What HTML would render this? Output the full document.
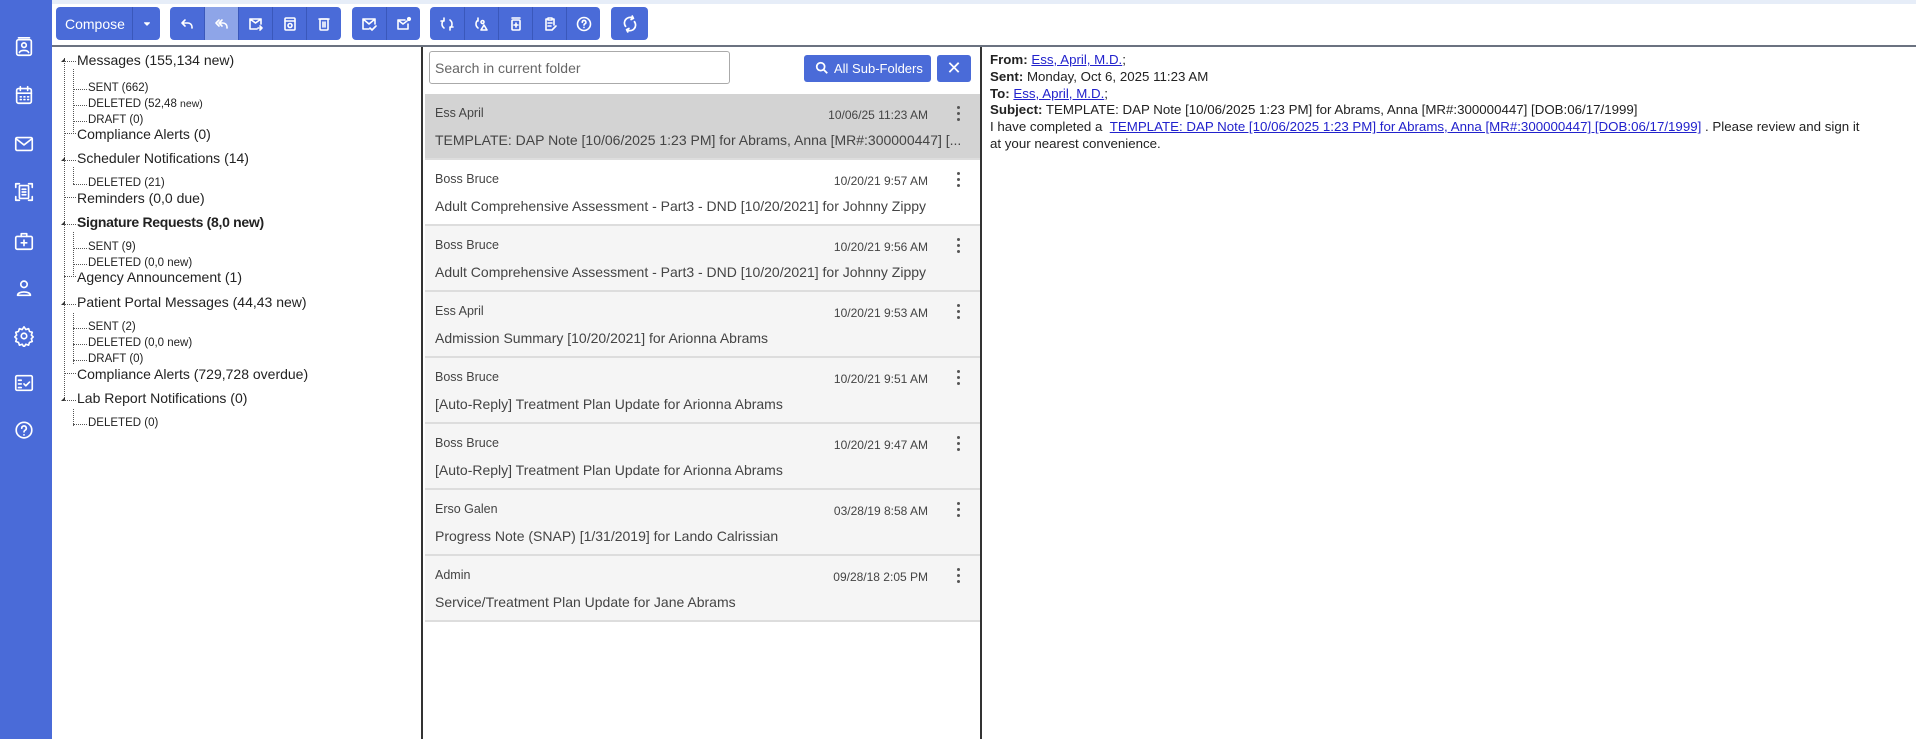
<!DOCTYPE html>
<html><head><meta charset="utf-8"><style>
*{box-sizing:border-box;margin:0;padding:0}
body{width:1916px;height:739px;overflow:hidden;background:#fff;font-family:"Liberation Sans",sans-serif;color:#222;position:relative}
.sb{position:absolute;left:0;top:0;width:52px;height:739px;background:#4a6bd8}
.sb svg{position:absolute;left:13px;width:22px;height:22px;fill:none;stroke:#fff;stroke-width:1.8;stroke-linecap:round;stroke-linejoin:round}
.topbar{position:absolute;left:52px;top:0;right:0;height:4px;background:#e6edf8}
.tb{position:absolute;top:7px;height:33px;background:#4a6bd8;border-radius:4px;display:flex;overflow:hidden}
.tb .b{width:34px;height:33px;border-left:1px solid #3a58bb;display:flex;align-items:center;justify-content:center}
.tb .b:first-child{border-left:none}
.tb svg{width:16px;height:16px;fill:none;stroke:#fff;stroke-width:1.6;stroke-linecap:round;stroke-linejoin:round}
.hl{position:absolute;left:52px;right:0;top:45px;height:2px;background:#6b7280}
.tree{position:absolute;left:52px;top:47px;width:371px;height:692px;border-right:2px solid #333}
.t{position:absolute;white-space:nowrap}
.t.l{font-size:14px;left:25px}
.t.s{font-size:11.5px;left:36px}
.dots{position:absolute;border-top:1px dotted #555}
.vd{position:absolute;border-left:1px dotted #555}
.tri{position:absolute;left:9px;width:0;height:0;border-left:4px solid transparent;border-bottom:4px solid #333}
.list{position:absolute;left:425px;top:47px;width:557px;height:692px;border-right:2px solid #333}
.srch{position:absolute;left:4px;top:4px;width:301px;height:33px;border:1px solid #aaa;border-radius:3px;font-size:14px;color:#666;padding:8px 5px}
.asf{position:absolute;left:379px;top:8px;width:127px;height:27px;background:#4a6bd8;border-radius:3px;color:#fff;font-size:13px;padding:6px 0 0 30px}
.xb{position:absolute;left:512px;top:8px;width:34px;height:27px;background:#4a6bd8;border-radius:3px;color:#fff;font-size:18px;text-align:center;line-height:27px}
.row{position:absolute;left:0;width:555px;height:66px;border-bottom:2px solid #ddd;background:#f5f5f5}
.row .n{position:absolute;left:10px;top:12px;font-size:12.5px;color:#444}
.row .d{position:absolute;right:52px;top:14px;font-size:12px;color:#444}
.row .k{position:absolute;left:532px;top:12px;width:3px}
.row .k i{display:block;width:3px;height:3px;background:#555;border-radius:50%;margin-bottom:3px}
.row .m{position:absolute;left:10px;top:38px;font-size:14px;color:#444;white-space:nowrap}
.det{position:absolute;left:990px;top:52px;font-size:13.3px;line-height:16.8px;color:#222}
.det a{color:#2222cc;text-decoration:underline}
</style></head><body>
<div class="sb">
<svg style="top:36px" viewBox="0 0 24 24"><rect x="4" y="4" width="16" height="17" rx="2"/><line x1="6" y1="2" x2="18" y2="2"/><circle cx="12" cy="10" r="2.5"/><path d="M7 18c1-3 9-3 10 0"/></svg>
<svg style="top:84px" viewBox="0 0 24 24"><rect x="4" y="5" width="16" height="16" rx="2"/><line x1="8" y1="3" x2="8" y2="7"/><line x1="16" y1="3" x2="16" y2="7"/><line x1="4" y1="10" x2="20" y2="10"/><path d="M8 14h1M12 14h1M16 14h1M8 17h1M12 17h1M16 17h1"/></svg>
<svg style="top:133px" viewBox="0 0 24 24"><rect x="3" y="5" width="18" height="14" rx="1.5"/><path d="M3 6l9 7 9-7"/></svg>
<svg style="top:181px" viewBox="0 0 24 24"><path d="M3 7V3h4M17 3h4v4M21 17v4h-4M7 21H3v-4"/><rect x="7" y="5" width="10" height="14" rx="1"/><path d="M10 9h4M10 12h4M10 15h4"/></svg>
<svg style="top:230px" viewBox="0 0 24 24"><rect x="3" y="7" width="18" height="14" rx="1.5"/><path d="M9 7V4h6v3M12 11v6M9 14h6"/></svg>
<svg style="top:277px" viewBox="0 0 24 24"><circle cx="12" cy="8" r="3.5"/><path d="M5 20c0-5 14-5 14 0z"/></svg>
<svg style="top:325px" viewBox="0 0 24 24"><circle cx="12" cy="12" r="3"/><path d="M12 2l2 3 3-1 1 3 3 1-1 3 2 2-2 2 1 3-3 1-1 3-3-1-2 3-2-3-3 1-1-3-3-1 1-3-2-2 2-2-1-3 3-1 1-3 3 1z"/></svg>
<svg style="top:372px" viewBox="0 0 24 24"><rect x="3" y="4" width="18" height="16" rx="1.5"/><path d="M6 9h3M6 13h3M6 17h3M12 13l2 2 4-4"/></svg>
<svg style="top:420px" viewBox="0 0 24 24"><circle cx="12" cy="11" r="8.5"/><path d="M9.5 9a2.5 2.5 0 1 1 3.5 2.3c-.7.4-1 1-1 1.7M12 16v.3"/></svg>
</div>
<div class="topbar"></div>
<div class="tb" style="left:56px;width:104px"><div style="width:76px;color:#fff;font-size:14px;padding:9px 0 0 9px">Compose</div><div class="b" style="width:28px"><svg viewBox="0 0 16 16" style="width:10px"><path d="M4 6h8l-4 4z" fill="#fff"/></svg></div></div>
<div class="tb" style="left:170px;width:171px">
<div class="b"><svg viewBox="0 0 16 16"><path d="M6 4L3 7l3 3M3 7h6a4 4 0 0 1 4 4v1"/></svg></div>
<div class="b" style="background:#8ea5e8"><svg viewBox="0 0 16 16"><path d="M5 4L2 7l3 3M8 4L5 7l3 3M5 7h4a4 4 0 0 1 4 4v1"/></svg></div>
<div class="b"><svg viewBox="0 0 16 16"><path d="M13 8V3H2v10h7M2 3l5.5 4L13 3M10 12h4M12 10l2 2-2 2"/></svg></div>
<div class="b"><svg viewBox="0 0 16 16"><rect x="3" y="2" width="10" height="12" rx="1"/><path d="M3 5h10"/><circle cx="8" cy="9.5" r="2"/></svg></div>
<div class="b"><svg viewBox="0 0 16 16"><rect x="4" y="3" width="8" height="11" rx="1"/><path d="M3 3h10M7 6v5M9 6v5"/></svg></div>
</div>
<div class="tb" style="left:352px;width:68px">
<div class="b"><svg viewBox="0 0 16 16"><path d="M14 8V3H2v10h6M2 3l6 5 6-5M9 12l2 2 4-4"/></svg></div>
<div class="b"><svg viewBox="0 0 16 16"><path d="M12 8v5H2V4h7M2 4l5 4 4-3"/><circle cx="13" cy="3" r="1.3" fill="#fff"/></svg></div>
</div>
<div class="tb" style="left:430px;width:170px">
<div class="b"><svg viewBox="0 0 16 16"><path d="M5 4a5 5 0 0 0 0 8M11 12a5 5 0 0 0 0-8M5 2v3H2M11 14v-3h3"/></svg></div>
<div class="b"><svg viewBox="0 0 16 16"><path d="M4 4a5 5 0 0 0 0 8M4 2v3M10 6a1.5 1.5 0 1 0 0 .1M7 14l3-5 3 5z"/></svg></div>
<div class="b"><svg viewBox="0 0 16 16"><rect x="4" y="4" width="8" height="10" rx="1"/><path d="M4 2h8M8 7v4M6 9h4"/></svg></div>
<div class="b"><svg viewBox="0 0 16 16"><path d="M10 3h2v6M6 3H4v11h5M6 2h4v2H6zM6 7h4M6 10h3M10 14l4-4"/></svg></div>
<div class="b"><svg viewBox="0 0 16 16"><circle cx="8" cy="8" r="6.5"/><path d="M6.3 6.3a1.8 1.8 0 1 1 2.4 1.6c-.5.3-.7.7-.7 1.2M8 11.3v.2"/></svg></div>
</div>
<div class="tb" style="left:611px;width:37px"><div class="b" style="width:37px"><svg viewBox="0 0 16 16" style="width:18px;height:18px"><path d="M4 10a5 5 0 0 1 6-7.5M12 6a5 5 0 0 1-6 7.5M10 1l1 2-2 1M6 15l-1-2 2-1"/></svg></div></div>
<div class="hl"></div>

<div class="tree">
<div class="vd" style="left:12px;top:11px;height:340px"></div>
<div class="vd" style="left:21px;top:22px;height:63px"></div>
<div class="vd" style="left:21px;top:120px;height:17px"></div>
<div class="vd" style="left:21px;top:185px;height:43px"></div>
<div class="vd" style="left:21px;top:266px;height:51px"></div>
<div class="vd" style="left:21px;top:362px;height:17px"></div>
<div class="tri" style="top:11px"></div><div class="tri" style="top:110px"></div><div class="tri" style="top:174px"></div><div class="tri" style="top:254px"></div><div class="tri" style="top:350px"></div>

<div class="dots" style="left:12px;top:14px;width:12px"></div><div class="t l" style="top:5px;left:25px">Messages (155,134 new)</div>
<div class="dots" style="left:21px;top:42px;width:14px"></div><div class="t s" style="top:35px">SENT (662)</div>
<div class="dots" style="left:21px;top:58px;width:14px"></div><div class="t s" style="top:51px">DELETED (52,48 <span style="font-size:10.5px">new)</span></div>
<div class="dots" style="left:21px;top:74px;width:14px"></div><div class="t s" style="top:67px">DRAFT (0)</div>
<div class="dots" style="left:12px;top:86px;width:12px"></div><div class="t l" style="top:79px">Compliance Alerts (0)</div>
<div class="dots" style="left:12px;top:113px;width:12px"></div><div class="t l" style="top:103px">Scheduler Notifications (14)</div>
<div class="dots" style="left:21px;top:137px;width:14px"></div><div class="t s" style="top:130px">DELETED (21)</div>
<div class="dots" style="left:12px;top:150px;width:12px"></div><div class="t l" style="top:143px">Reminders (0,0 due)</div>
<div class="dots" style="left:12px;top:177px;width:12px"></div><div class="t l" style="top:167px;font-weight:bold;letter-spacing:-0.3px">Signature Requests (8,0 new)</div>
<div class="dots" style="left:21px;top:201px;width:14px"></div><div class="t s" style="top:194px">SENT (9)</div>
<div class="dots" style="left:21px;top:217px;width:14px"></div><div class="t s" style="top:210px">DELETED (0,0 new)</div>
<div class="dots" style="left:12px;top:229px;width:12px"></div><div class="t l" style="top:222px">Agency Announcement (1)</div>
<div class="dots" style="left:12px;top:257px;width:12px"></div><div class="t l" style="top:247px">Patient Portal Messages (44,43 new)</div>
<div class="dots" style="left:21px;top:281px;width:14px"></div><div class="t s" style="top:274px">SENT (2)</div>
<div class="dots" style="left:21px;top:297px;width:14px"></div><div class="t s" style="top:290px">DELETED (0,0 new)</div>
<div class="dots" style="left:21px;top:313px;width:14px"></div><div class="t s" style="top:306px">DRAFT (0)</div>
<div class="dots" style="left:12px;top:326px;width:12px"></div><div class="t l" style="top:319px">Compliance Alerts (729,728 overdue)</div>
<div class="dots" style="left:12px;top:353px;width:12px"></div><div class="t l" style="top:343px">Lab Report Notifications (0)</div>
<div class="dots" style="left:21px;top:377px;width:14px"></div><div class="t s" style="top:370px">DELETED (0)</div>
</div>

<div class="list">
<div class="srch">Search in current folder</div>
<div class="asf"><svg viewBox="0 0 16 16" style="position:absolute;left:11px;top:6px;width:14px;height:14px;fill:none;stroke:#fff;stroke-width:2"><circle cx="6.5" cy="6.5" r="4.5"/><path d="M10 10l4 4"/></svg>All Sub-Folders</div>
<div class="xb">✕</div>
<div class="row" style="top:47px;background:#d3d3d3"><div class="n">Ess April</div><div class="d">10/06/25 11:23 AM</div><div class="k"><i></i><i></i><i></i></div><div class="m">TEMPLATE: DAP Note [10/06/2025 1:23 PM] for Abrams, Anna [MR#:300000447] [...</div></div>
<div class="row" style="top:113px;background:#fff"><div class="n">Boss Bruce</div><div class="d">10/20/21 9:57 AM</div><div class="k"><i></i><i></i><i></i></div><div class="m">Adult Comprehensive Assessment - Part3 - DND [10/20/2021] for Johnny Zippy</div></div>
<div class="row" style="top:179px"><div class="n">Boss Bruce</div><div class="d">10/20/21 9:56 AM</div><div class="k"><i></i><i></i><i></i></div><div class="m">Adult Comprehensive Assessment - Part3 - DND [10/20/2021] for Johnny Zippy</div></div>
<div class="row" style="top:245px"><div class="n">Ess April</div><div class="d">10/20/21 9:53 AM</div><div class="k"><i></i><i></i><i></i></div><div class="m">Admission Summary [10/20/2021] for Arionna Abrams</div></div>
<div class="row" style="top:311px"><div class="n">Boss Bruce</div><div class="d">10/20/21 9:51 AM</div><div class="k"><i></i><i></i><i></i></div><div class="m">[Auto-Reply] Treatment Plan Update for Arionna Abrams</div></div>
<div class="row" style="top:377px"><div class="n">Boss Bruce</div><div class="d">10/20/21 9:47 AM</div><div class="k"><i></i><i></i><i></i></div><div class="m">[Auto-Reply] Treatment Plan Update for Arionna Abrams</div></div>
<div class="row" style="top:443px"><div class="n">Erso Galen</div><div class="d">03/28/19 8:58 AM</div><div class="k"><i></i><i></i><i></i></div><div class="m">Progress Note (SNAP) [1/31/2019] for Lando Calrissian</div></div>
<div class="row" style="top:509px"><div class="n">Admin</div><div class="d">09/28/18 2:05 PM</div><div class="k"><i></i><i></i><i></i></div><div class="m">Service/Treatment Plan Update for Jane Abrams</div></div>
</div>

<div class="det">
<div><b>From:</b> <a>Ess, April, M.D.</a>;</div>
<div><b>Sent:</b> Monday, Oct 6, 2025 11:23 AM</div>
<div><b>To:</b> <a>Ess, April, M.D.</a>;</div>
<div><b>Subject:</b> TEMPLATE: DAP Note [10/06/2025 1:23 PM] for Abrams, Anna [MR#:300000447] [DOB:06/17/1999]</div>
<div>I have completed a &nbsp;<a>TEMPLATE: DAP Note [10/06/2025 1:23 PM] for Abrams, Anna [MR#:300000447] [DOB:06/17/1999]</a> . Please review and sign it</div>
<div>at your nearest convenience.</div>
</div>
</body></html>
